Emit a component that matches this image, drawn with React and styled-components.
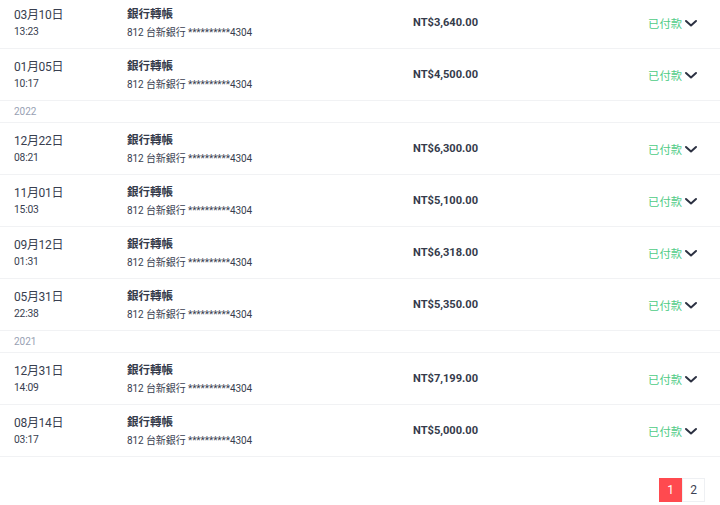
import styled, { createGlobalStyle } from "styled-components";

const GlobalStyle = createGlobalStyle`
  html, body {
    margin: 0;
    padding: 0;
    background: #fff;
    font-family: Roboto, "Noto Sans CJK TC", sans-serif;
    color: #3b4152;
  }
`;

const groups = [
  {
    year: null,
    items: [
      { date: "03月10日", time: "13:23", amount: "NT$3,640.00" },
      { date: "01月05日", time: "10:17", amount: "NT$4,500.00" },
    ],
  },
  {
    year: "2022",
    items: [
      { date: "12月22日", time: "08:21", amount: "NT$6,300.00" },
      { date: "11月01日", time: "15:03", amount: "NT$5,100.00" },
      { date: "09月12日", time: "01:31", amount: "NT$6,318.00" },
      { date: "05月31日", time: "22:38", amount: "NT$5,350.00" },
    ],
  },
  {
    year: "2021",
    items: [
      { date: "12月31日", time: "14:09", amount: "NT$7,199.00" },
      { date: "08月14日", time: "03:17", amount: "NT$5,000.00" },
    ],
  },
];

const Page = styled.div`
  width: 720px;
  margin-top: -3px;
`;

const List = styled.div`
  display: flex;
  flex-direction: column;
`;

const YearRow = styled.div`
  height: 21px;
  display: flex;
  align-items: center;
  padding-left: 14px;
  font-size: 10px;
  color: #98a1b3;
  border-bottom: 1px solid #f1f2f4;
`;

const Row = styled.div`
  height: 51px;
  display: flex;
  align-items: center;
  padding: 0 22px 0 14px;
  border-bottom: 1px solid #f1f2f4;
`;

const DateCol = styled.div`
  width: 113px;
  display: flex;
  flex-direction: column;
`;

const DateText = styled.div`
  font-size: 12px;
  letter-spacing: -0.3px;
  line-height: 18px;
  color: #383e4f;
`;

const TimeText = styled.div`
  font-size: 10.3px;
  letter-spacing: -0.2px;
  line-height: 16px;
  color: #383e4f;
`;

const InfoCol = styled.div`
  width: 286px;
  display: flex;
  flex-direction: column;
`;

const Title = styled.div`
  font-size: 11.5px;
  font-weight: 700;
  line-height: 20px;
  color: #353b4b;
`;

const Sub = styled.div`
  font-size: 10px;
  letter-spacing: -0.1px;
  line-height: 18px;
  color: #383e4f;
`;

const Amount = styled.div`
  flex: 1;
  font-size: 11.1px;
  font-weight: 700;
  color: #353b4b;
`;

const Status = styled.div`
  display: flex;
  align-items: center;
  gap: 2px;
  font-size: 11.3px;
  color: #4ecb86;
`;

const Pager = styled.div`
  display: flex;
  justify-content: flex-end;
  padding: 21px 15px 0 0;
`;

const PageBtn = styled.div`
  width: 23px;
  height: 24px;
  display: flex;
  align-items: center;
  justify-content: center;
  font-size: 12px;
  box-sizing: border-box;
  background: ${(p) => (p.$active ? "#ff4a4f" : "#fff")};
  color: ${(p) => (p.$active ? "#fff" : "#3b4152")};
  border: 1px solid ${(p) => (p.$active ? "#ff4a4f" : "#eef0f3")};
`;

const Chevron = () => (
  <svg width="14" height="14" viewBox="0 0 14 14">
    <path
      d="M2 5l5 4.5 5-4.5"
      fill="none"
      stroke="#2c3142"
      strokeWidth="2"
      strokeLinecap="round"
      strokeLinejoin="round"
    />
  </svg>
);

export default function App() {
  return (
    <Page>
      <GlobalStyle />
      <List>
        {groups.map((g, gi) => (
          <div key={gi}>
            {g.year && <YearRow>{g.year}</YearRow>}
            {g.items.map((it) => (
              <Row key={it.date + it.time}>
                <DateCol>
                  <DateText>{it.date}</DateText>
                  <TimeText>{it.time}</TimeText>
                </DateCol>
                <InfoCol>
                  <Title>銀行轉帳</Title>
                  <Sub>812 台新銀行 **********4304</Sub>
                </InfoCol>
                <Amount>{it.amount}</Amount>
                <Status>
                  已付款
                  <Chevron />
                </Status>
              </Row>
            ))}
          </div>
        ))}
      </List>
      <Pager>
        <PageBtn $active>1</PageBtn>
        <PageBtn>2</PageBtn>
      </Pager>
    </Page>
  );
}
